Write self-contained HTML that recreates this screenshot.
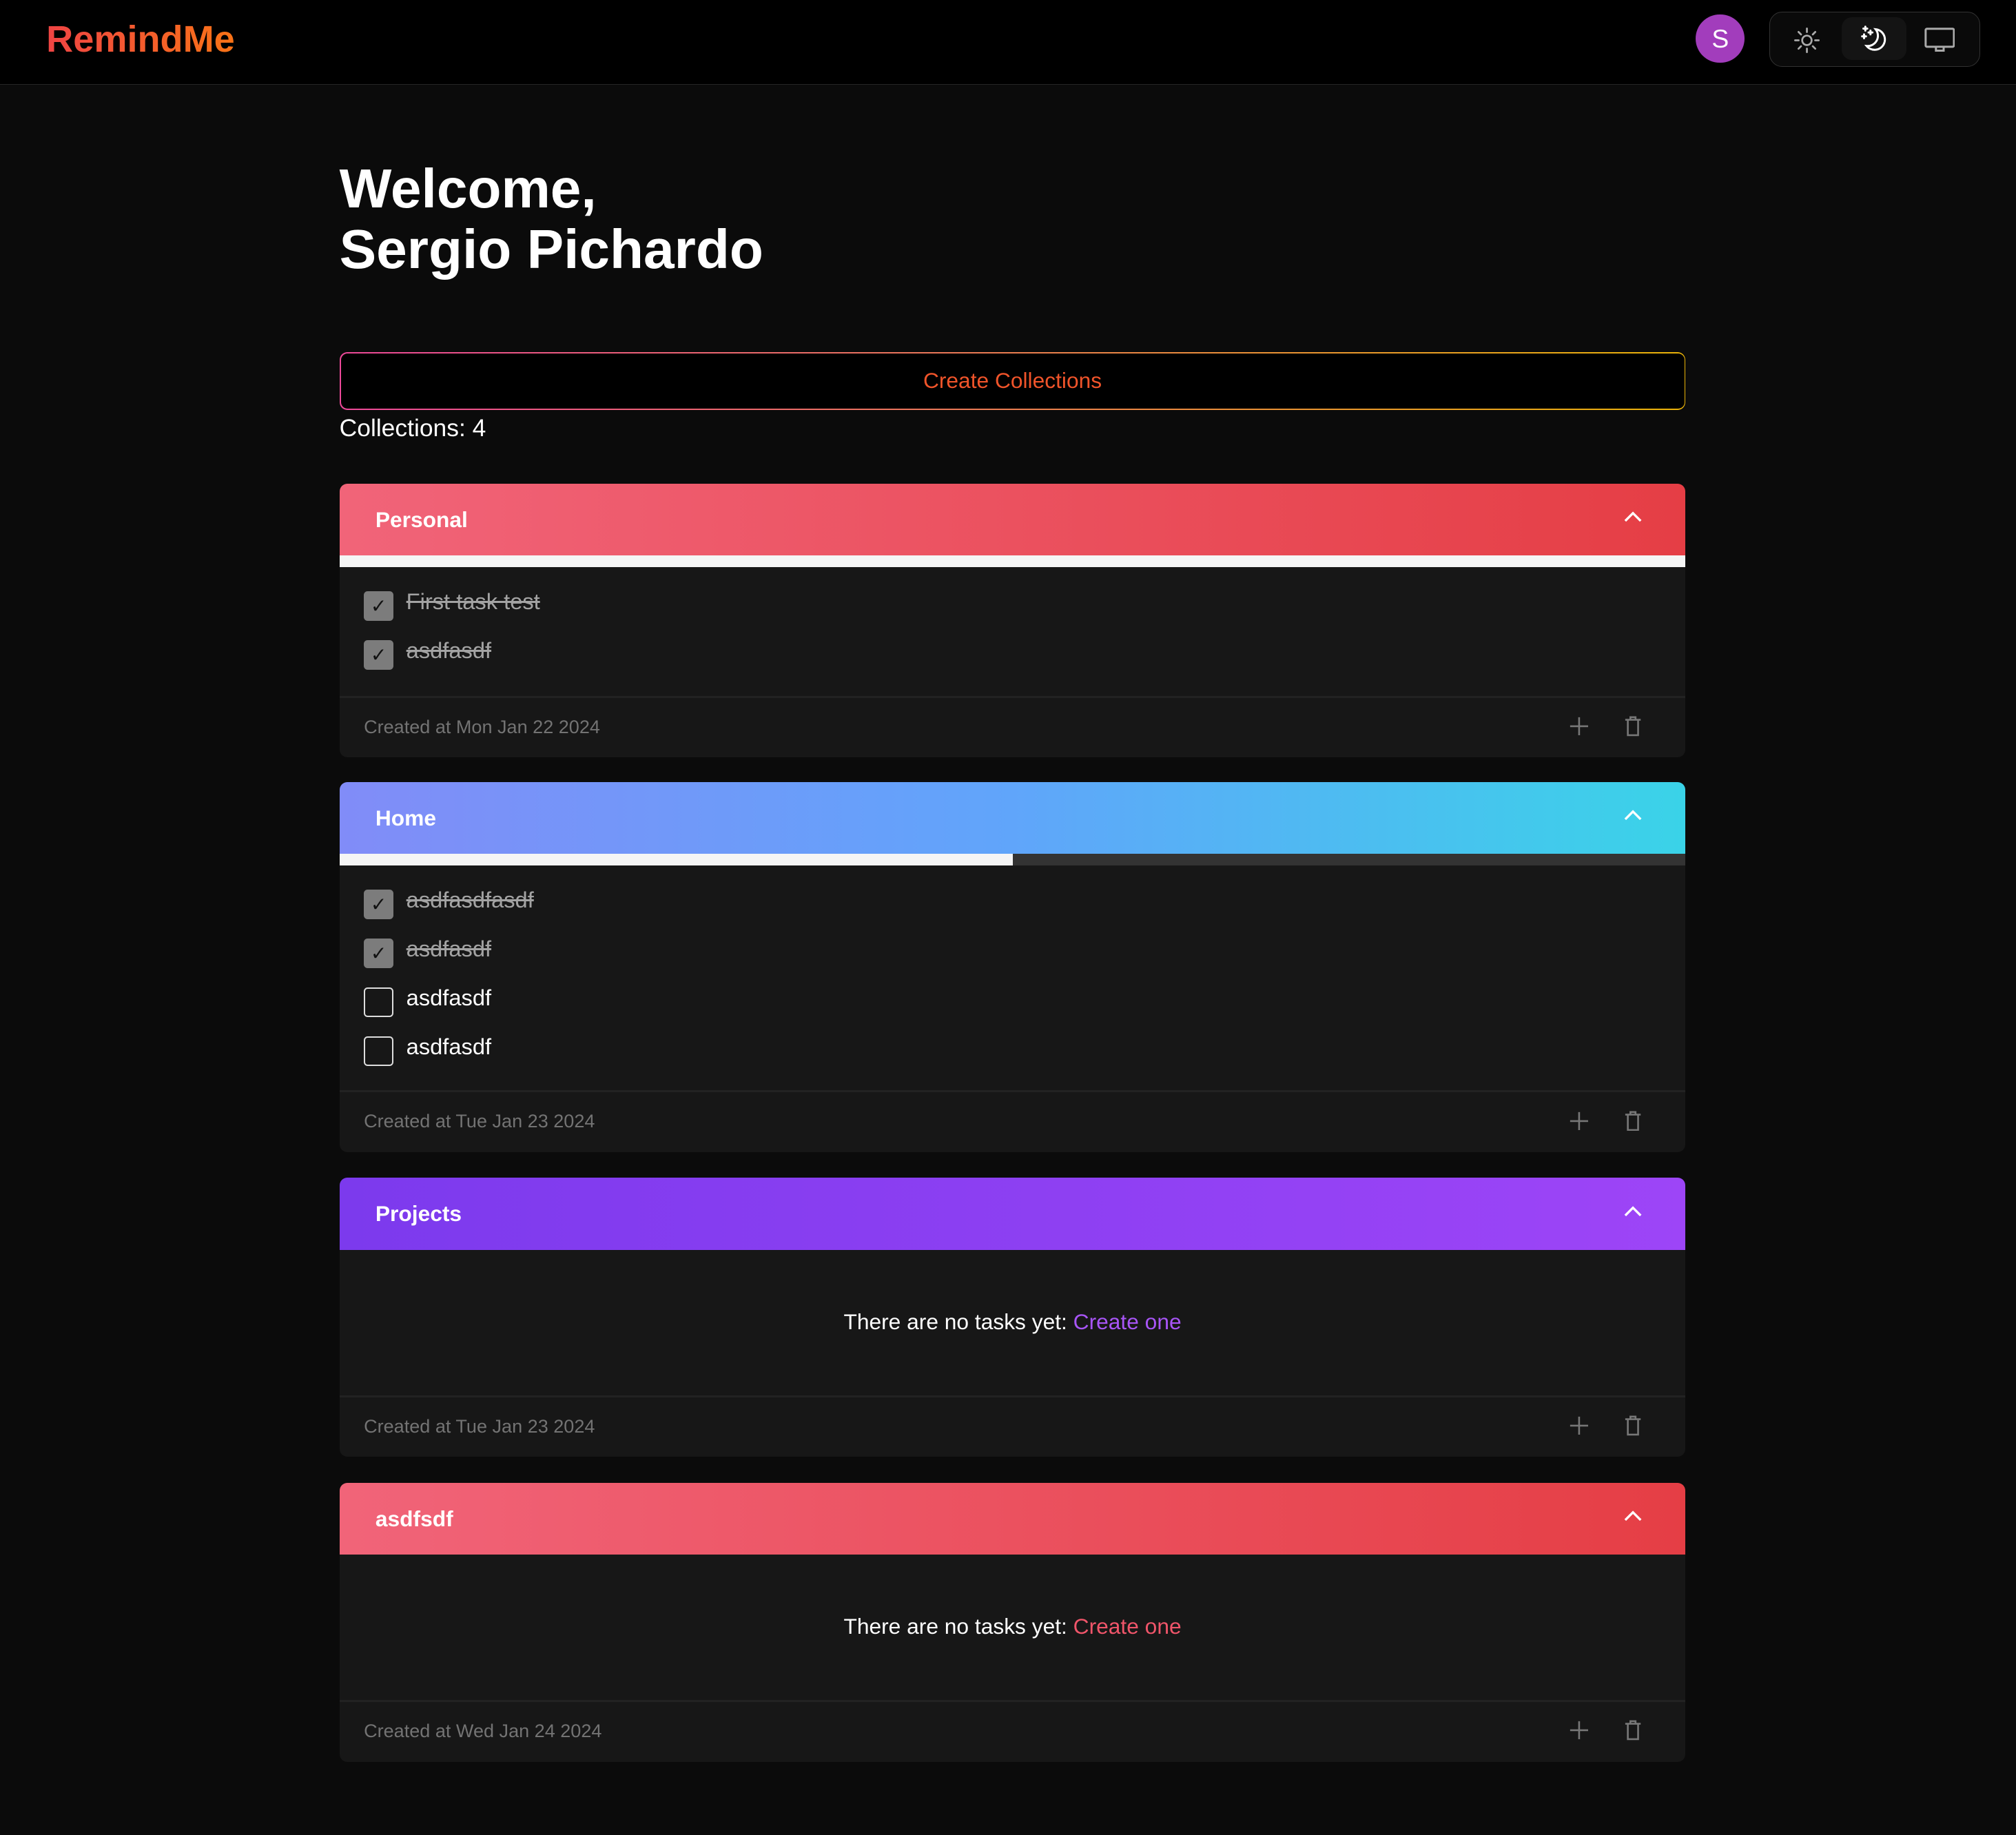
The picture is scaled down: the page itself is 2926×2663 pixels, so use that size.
<!DOCTYPE html>
<html><head><meta charset="utf-8"><style>
*{box-sizing:border-box;margin:0;padding:0}
html,body{background:#0b0b0b}
body{zoom:1.8661;width:1568px;height:1427px;font-family:"Liberation Sans",sans-serif;color:#fff;position:relative;overflow:hidden}
.nav{position:absolute;left:0;top:0;width:1568px;height:66px;background:#000;border-bottom:1px solid #262626}
.logo{position:absolute;left:36px;top:14px;font-size:29px;font-weight:bold;background:linear-gradient(90deg,#ef4444,#f97316);-webkit-background-clip:text;color:transparent}
.av{position:absolute;left:1319px;top:11px;width:38px;height:38px;border-radius:50%;background:#a23dbc;text-align:center;line-height:38px;font-size:20px}
.tg{position:absolute;left:1376px;top:9px;width:164px;height:43px;border:1px solid #333;border-radius:10px;background:#0a0a0a}
.tg .act{position:absolute;left:56px;top:4px;width:50px;height:33px;border-radius:8px;background:#141414}
h1{position:absolute;left:264px;top:124px;font-size:43px;line-height:47px;font-weight:bold}
.btn{position:absolute;left:264px;top:274px;width:1047px;height:45px;border-radius:6px;padding:1px;background:linear-gradient(90deg,#ec4899,#eab308)}
.btn div{width:100%;height:100%;background:#000;border-radius:5px;text-align:center;line-height:42px;font-size:17px;color:#f0542a}
.cnt{position:absolute;left:264px;top:322px;font-size:19px}
.card{position:absolute;left:264px;width:1047px;background:#171717;border-radius:6px;overflow:hidden}
.hd{height:56px;padding-left:28px;line-height:56px;font-size:17px;font-weight:bold;position:relative}
.hd svg{position:absolute;right:34px;top:21px}
.red{background:linear-gradient(90deg,#f16479,#e53e45)}
.blue{background:linear-gradient(90deg,#818cf8,#60a5fa 50%,#3ad3e8)}
.pur{background:linear-gradient(90deg,#7c3aed,#9d45f7)}
.pb{height:9px;background:#333}
.pb div{height:100%;background:#f5f5f5}
.items{padding:13px 19px 0}
.it{height:38px;font-size:17.5px;position:relative;padding-left:33px;line-height:28px;font-weight:500}
.cb{position:absolute;left:0;top:6px;width:23px;height:23px;border-radius:3px;border:1.5px solid #ddd}
.cb.k{background:#7c7c7c;border:none;color:#111;font-size:15px;text-align:center;line-height:24px}
.done{color:#a3a3a3;text-decoration:line-through}
.ft{position:absolute;left:0;bottom:0;width:100%;height:48px;border-top:2px solid #222;padding-left:19px;line-height:46px;font-size:14.5px;color:#737373}
.ft .ic{position:absolute;top:14px}
.empty{text-align:center;font-size:17px}
</style></head><body>
<div class="nav">
<div class="logo">RemindMe</div>
<div class="av">S</div>
<div class="tg"><div class="act"></div>
<svg style="position:absolute;left:18px;top:11px" width="22" height="22" viewBox="0 0 24 24" fill="none" stroke="#aaa" stroke-width="1.6" stroke-linecap="round"><circle cx="12" cy="12" r="4"/><path d="M12 2v3M12 19v3M2 12h3M19 12h3M4.9 4.9l2.1 2.1M17 17l2.1 2.1M4.9 19.1L7 17M17 7l2.1-2.1"/></svg>
<svg style="position:absolute;left:69px;top:9px" width="24" height="24" viewBox="0 0 24 24" fill="none" stroke="#fff" stroke-width="1.6" stroke-linecap="round"><path d="M13 4a8 8 0 1 1-7 13a8 8 0 0 0 7-13z"/><path d="M5 2v3M3.5 3.5h3M9 5v3M7.5 6.5h3M4 8v3M2.5 9.5h3"/></svg>
<svg style="position:absolute;left:120px;top:11px" width="24" height="22" viewBox="0 0 24 22" fill="none" stroke="#aaa" stroke-width="1.6"><rect x="1" y="2" width="22" height="14" rx="1"/><path d="M9 16v3h6v-3"/></svg>
</div>
</div>
<h1>Welcome,<br>Sergio Pichardo</h1>
<div class="btn"><div>Create Collections</div></div>
<div class="cnt">Collections: 4</div>

<div class="card" style="top:376px;height:213px">
<div class="hd red">Personal<svg width="14" height="10" viewBox="0 0 14 10" fill="none" stroke="#fff" stroke-width="1.8"><path d="M1 8l6-6 6 6"/></svg></div>
<div class="pb"><div style="width:100%"></div></div>
<div class="items">
<div class="it"><span class="cb k">✓</span><span class="done">First task test</span></div>
<div class="it"><span class="cb k">✓</span><span class="done">asdfasdf</span></div>
</div>
<div class="ft">Created at Mon Jan 22 2024
<svg class="ic" style="right:75px" width="16" height="16" viewBox="0 0 16 16" stroke="#777" stroke-width="1.4"><path d="M8 1v14M1 8h14"/></svg>
<svg class="ic" style="right:34px" width="14" height="16" viewBox="0 0 14 16" fill="none" stroke="#777" stroke-width="1.4"><path d="M1 3h12M5 3V1h4v2M3 3v12h8V3"/></svg></div>
</div>

<div class="card" style="top:608px;height:288px">
<div class="hd blue">Home<svg width="14" height="10" viewBox="0 0 14 10" fill="none" stroke="#fff" stroke-width="1.8"><path d="M1 8l6-6 6 6"/></svg></div>
<div class="pb"><div style="width:50%"></div></div>
<div class="items">
<div class="it"><span class="cb k">✓</span><span class="done">asdfasdfasdf</span></div>
<div class="it"><span class="cb k">✓</span><span class="done">asdfasdf</span></div>
<div class="it"><span class="cb"></span>asdfasdf</div>
<div class="it"><span class="cb"></span>asdfasdf</div>
</div>
<div class="ft">Created at Tue Jan 23 2024
<svg class="ic" style="right:75px" width="16" height="16" viewBox="0 0 16 16" stroke="#777" stroke-width="1.4"><path d="M8 1v14M1 8h14"/></svg>
<svg class="ic" style="right:34px" width="14" height="16" viewBox="0 0 14 16" fill="none" stroke="#777" stroke-width="1.4"><path d="M1 3h12M5 3V1h4v2M3 3v12h8V3"/></svg></div>
</div>

<div class="card" style="top:916px;height:217px">
<div class="hd pur">Projects<svg width="14" height="10" viewBox="0 0 14 10" fill="none" stroke="#fff" stroke-width="1.8"><path d="M1 8l6-6 6 6"/></svg></div>
<div class="empty" style="margin-top:46px">There are no tasks yet: <span style="color:#a855f7">Create one</span></div>
<div class="ft">Created at Tue Jan 23 2024
<svg class="ic" style="right:75px" width="16" height="16" viewBox="0 0 16 16" stroke="#777" stroke-width="1.4"><path d="M8 1v14M1 8h14"/></svg>
<svg class="ic" style="right:34px" width="14" height="16" viewBox="0 0 14 16" fill="none" stroke="#777" stroke-width="1.4"><path d="M1 3h12M5 3V1h4v2M3 3v12h8V3"/></svg></div>
</div>

<div class="card" style="top:1153px;height:217px">
<div class="hd red">asdfsdf<svg width="14" height="10" viewBox="0 0 14 10" fill="none" stroke="#fff" stroke-width="1.8"><path d="M1 8l6-6 6 6"/></svg></div>
<div class="empty" style="margin-top:46px">There are no tasks yet: <span style="color:#f0556a">Create one</span></div>
<div class="ft">Created at Wed Jan 24 2024
<svg class="ic" style="right:75px" width="16" height="16" viewBox="0 0 16 16" stroke="#777" stroke-width="1.4"><path d="M8 1v14M1 8h14"/></svg>
<svg class="ic" style="right:34px" width="14" height="16" viewBox="0 0 14 16" fill="none" stroke="#777" stroke-width="1.4"><path d="M1 3h12M5 3V1h4v2M3 3v12h8V3"/></svg></div>
</div>
</body></html>
